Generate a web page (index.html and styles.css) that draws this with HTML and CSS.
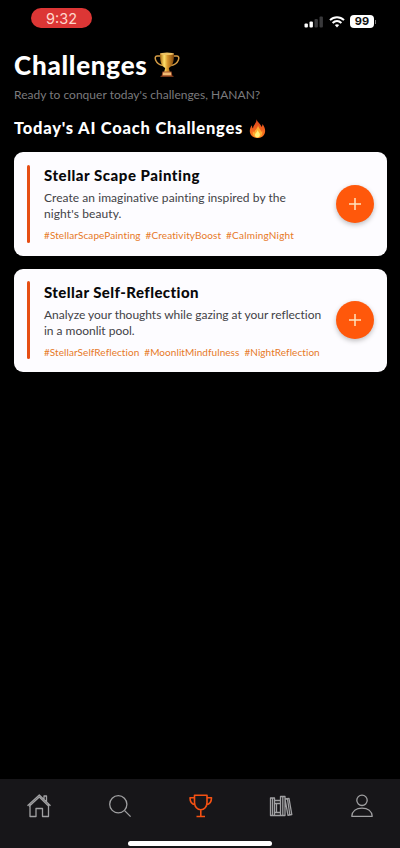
FILE: index.html
```html
<!DOCTYPE html>
<html lang="en">
<head>
<meta charset="utf-8">
<meta name="viewport" content="width=device-width, initial-scale=1">
<title>Challenges</title>
<link rel="stylesheet" href="styles.css">
</head>
<body>
<div class="screen">
  <header class="status">
    <div class="clock">9:32</div>
    <div class="indicators">
      <svg width="20" height="12" viewBox="0 0 20 12"><rect x="0.5" y="7.5" width="3.4" height="4" rx="1" fill="#fff"/><rect x="5.5" y="5.5" width="3.4" height="6" rx="1" fill="#fff"/><rect x="10.5" y="3" width="3.4" height="8.5" rx="1" fill="#39393b"/><rect x="15.5" y="0.5" width="3.4" height="11" rx="1" fill="#39393b"/></svg>
      <svg class="wifi" width="16" height="12" viewBox="0 0 16 12" fill="none" stroke="#fff" stroke-width="2"><path d="M1 4.1C5 .2 11 .2 15 4.1M3.6 6.9c2.6-2.4 6.2-2.4 8.8 0"/><path d="M5.8 9.1c1.3-1.1 3.1-1.1 4.4 0L8 11.5z" fill="#fff" stroke="none"/></svg>
      <div class="battery"><span>99</span><i></i></div>
    </div>
  </header>
  <main class="content">
    <h1 class="title"><span>Challenges</span>
      <svg class="cup" width="26" height="26" viewBox="0 0 26 26">
        <defs><linearGradient id="gold"><stop offset="0" stop-color="#a86712"/><stop offset=".3" stop-color="#ffe06a"/><stop offset=".55" stop-color="#d5932a"/><stop offset="1" stop-color="#80470d"/></linearGradient></defs>
        <path d="M6.5 4H3C-.5 4 1 12 9 13.500M19.500 4H23c3.500 0 2 8-6 9.500" fill="none" stroke="#d59c45" stroke-width="1.500"/>
        <path d="M6 1.500h14c0 7-.7 12-5.200 14.500l1 4h-5.600l1-4C6.700 13.500 6 8.500 6 1.500z" fill="url(#gold)"/>
        <ellipse cx="13" cy="1.800" rx="7" ry="1.200" fill="#efc363"/>
        <path d="M8.500 19.500h9l1 5h-11z" fill="#a4542e"/><path d="M9 20.500h8v2.800H9z" fill="#f1bb72"/><path d="M6.500 23.800h13V25h-13z" fill="#743719"/>
      </svg>
    </h1>
    <p class="intro">Ready to conquer today's challenges, HANAN?</p>
    <h2 class="subtitle"><span>Today's AI Coach Challenges</span>
      <svg class="flame" width="17" height="19" viewBox="0 0 17 19">
        <defs><linearGradient id="heat" x2="0" y2="1"><stop stop-color="#dc421c"/><stop offset="1" stop-color="#ff7c1f"/></linearGradient></defs>
        <path d="M7.500 0c.4 3 4.200 4.500 5 8 .8-.8 1-2 .9-3 2 2.300 3.300 5.600 2.500 8.700C15 17 12 19 8.500 19S1.800 17 1 13.700C.3 10.500 1.500 8 3 6.300c0 1.500.2 2.500 1 3.200C4 6 7.800 4 7.500 0z" fill="url(#heat)"/>
        <path d="M9 6c.2 3 3 4.500 3.200 7 .5-.4.8-1 .9-1.700 1 4-1 7.200-4.600 7.200-3.800 0-5.500-3-4.500-6.500.4 1 .8 1.400 1.400 1.700C5.500 11 9 9.500 9 6z" fill="#ffad31"/>
        <path d="M8.700 11c.2 2 2.500 2.700 2.200 5-.2 1.500-1.200 2.400-2.500 2.400-1.600 0-2.600-1.100-2.400-2.700C6.200 13.800 8.500 13 8.700 11z" fill="#fff078"/>
      </svg>
    </h2>
    <section class="cards">
      <article class="card">
        <div class="accent"></div>
        <div class="copy">
          <h3 class="name name-a">Stellar Scape Painting</h3>
          <p class="desc desc-a">Create an imaginative painting inspired by the<br><span class="tail">night's beauty.</span></p>
          <div class="tags tags-a"><span>#StellarScapePainting</span><span>#CreativityBoost</span><span>#CalmingNight</span></div>
        </div>
        <button class="add" aria-label="Add"><svg width="14" height="14" viewBox="0 0 14 14" stroke="#ffe3bf" stroke-width="1.500"><path d="M7 1v12M1 7h12"/></svg></button>
      </article>
      <article class="card">
        <div class="accent"></div>
        <div class="copy">
          <h3 class="name name-b">Stellar Self-Reflection</h3>
          <p class="desc desc-b">Analyze your thoughts while gazing at your reflection<br>in a moonlit pool.</p>
          <div class="tags tags-b"><span>#StellarSelfReflection</span><span>#MoonlitMindfulness</span><span>#NightReflection</span></div>
        </div>
        <button class="add" aria-label="Add"><svg width="14" height="14" viewBox="0 0 14 14" stroke="#ffe3bf" stroke-width="1.500"><path d="M7 1v12M1 7h12"/></svg></button>
      </article>
    </section>
  </main>
  <footer class="dock">
    <nav class="tabs">
      <svg viewBox="0 0 26 26"><path d="M1.500 12.800 13.300 2l11.200 10.800M4 11v12.500h6v-8h6.500v8h6V11M18 6.300V3h2.500v5.700M3 13.500 13.300 4l9.700 9.500"/></svg>
      <svg viewBox="0 0 26 26"><circle cx="11.300" cy="11.300" r="8.600"/><path d="m17.600 17.600 6 6"/></svg>
      <svg class="active" viewBox="0 0 26 26"><path d="M6.500 2.200H19v7.300c0 4.300-2.800 7.300-6.200 7.300S6.500 13.800 6.500 9.500zM6.500 4.800H2c0 4.500 1.700 6.500 5.200 7M19 4.800h4.500c0 4.500-1.700 6.500-5.200 7M12.800 16.800v6.500M8.500 23.500H17"/></svg>
      <svg viewBox="0 0 26 26"><path d="M2.500 5h4v17.500h-4zM6.500 7.500h6v15h-6zM6.500 10.500h6M6.500 19.500h6M8.500 10.500v9M12.500 3.500H17v19h-4.500zM14.800 4v18M17 6l4-.7 2.800 16.200-3.800.8zM19.500 6l2.300 15.500M4.500 5.500v16.500"/></svg>
      <svg viewBox="0 0 26 26"><circle cx="13" cy="7.300" r="5.200"/><path d="M2.800 23.300c.3-5.200 4.500-8.200 10.200-8.200s9.900 3 10.200 8.200z"/></svg>
    </nav>
    <div class="home-bar"></div>
  </footer>
</div>
</body>
</html>
```
FILE: styles.css
```css
* { box-sizing: border-box; }
body { margin: 0; background: #000; font-family: Lato, sans-serif; font-variant-ligatures: none; }
h1, h2, h3, p { margin: 0; white-space: nowrap; }
.screen { width: 400px; height: 848px; display: flex; flex-direction: column; background: #000; overflow: hidden; }
.status { height: 46px; padding: 8px 24px 0 31px; display: flex; justify-content: space-between; align-items: flex-start; }
.clock { width: 61px; height: 20px; border-radius: 10px; background: #dc3635; color: #ffd6cb; font: 14.5px/21px Inter, sans-serif; text-align: center; }
.indicators { display: flex; align-items: center; padding-top: 7px; }
.wifi { margin: 0 5px 0 5px; }
.battery { display: flex; align-items: center; }
.battery span { width: 24px; height: 13px; border-radius: 4px; background: #fff; color: #111; font: 700 11px/13px Inter, sans-serif; text-align: center; }
.battery i { width: 1px; height: 4px; margin-left: 1px; background: #777; }
.content { flex: 1; padding: 4px 13px 0 14px; color: #fff; }
.title { display: flex; align-items: center; height: 30px; gap: 6px; font-size: 26px; font-weight: 900; letter-spacing: .75px; }
.intro { height: 20px; margin-top: 5px; font-size: 12px; line-height: 20px; color: #7b7b7d; letter-spacing: .02px; }
.subtitle { height: 22px; margin-top: 12px; display: flex; align-items: center; gap: 6px; font-size: 16.5px; font-weight: 900; letter-spacing: .77px; }
.cards { display: flex; flex-direction: column; gap: 13px; margin-top: 13px; }
.card { height: 103.5px; display: flex; align-items: center; padding: 0 13px; border-radius: 9px; background: #fdfcff; }
.accent { width: 3px; height: 78px; border-radius: 2px; background: #e64e14; }
.copy { flex: 1; height: 103.5px; padding: 13px 0 0 14px; }
.name { height: 21px; font-size: 15px; line-height: 21px; font-weight: 900; color: #09090a; }
.name-a { letter-spacing: .53px; }
.name-b { letter-spacing: .42px; }
.desc { margin-top: 4px; font-size: 12px; line-height: 16px; color: #424246; }
.desc-a { letter-spacing: .05px; }
.desc-b { letter-spacing: -.02px; }
.tail { letter-spacing: .1px; }
.tags { height: 14px; margin-top: 6px; display: flex; gap: 5px; font-size: 10px; line-height: 14px; color: #e77927; white-space: nowrap; }
.tags-a { letter-spacing: .1px; }
.tags-a span:last-child { letter-spacing: .2px; }
.tags-b { letter-spacing: .06px; }
.add { flex: none; width: 38px; height: 38px; padding: 0; border: 0; border-radius: 50%; background: #ff580b; display: grid; place-items: center; box-shadow: 0 2px 5px rgba(0,0,0,.25); }
.dock { height: 69px; background: #171619; display: flex; flex-direction: column; align-items: center; }
.tabs { width: 100%; height: 62px; padding: 14px 25px 0 26px; display: flex; justify-content: space-between; }
.tabs svg { width: 26px; height: 26px; fill: none; stroke: #a0a0a2; stroke-width: 1.3; stroke-linejoin: round; }
.tabs .active { stroke: #f45113; stroke-width: 1.6; }
.home-bar { width: 144px; height: 5px; border-radius: 3px; background: #fff; }
```
